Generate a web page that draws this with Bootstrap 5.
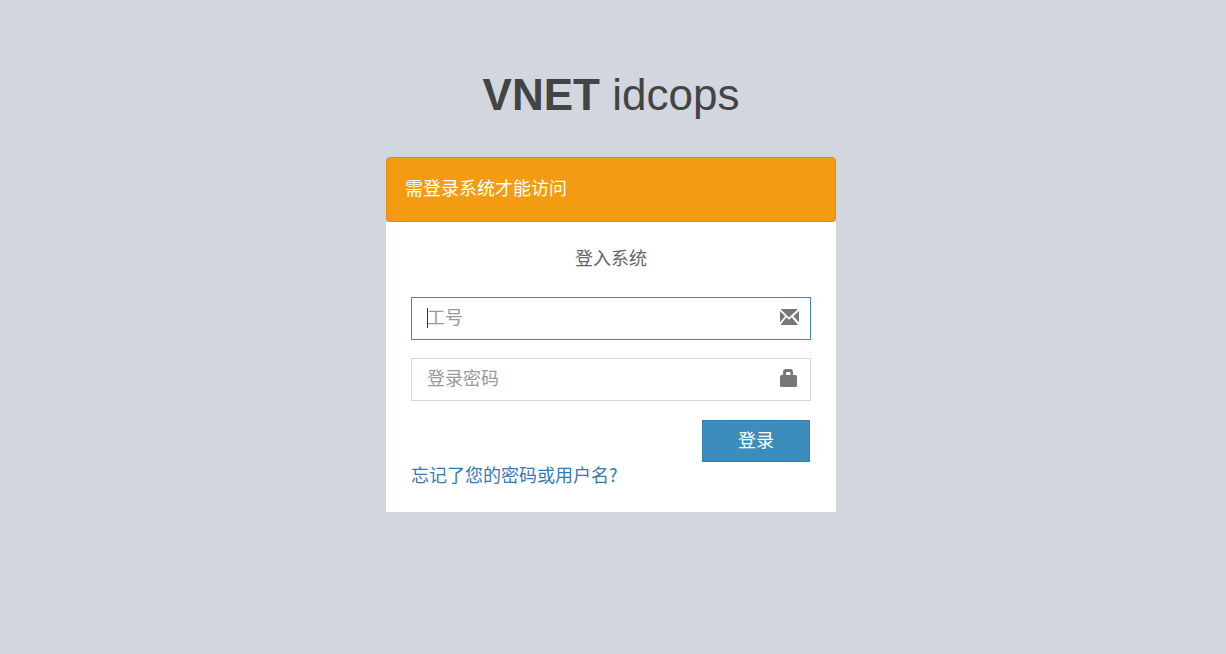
<!DOCTYPE html>
<html lang="zh-CN">
<head>
<meta charset="utf-8">
<meta name="viewport" content="width=device-width, initial-scale=1">
<title>VNET idcops</title>
<link href="https://cdn.jsdelivr.net/npm/bootstrap@5.3.0/dist/css/bootstrap.min.css" rel="stylesheet">
<style>
  body { background: #d2d6de; color: #666; font-family: "Liberation Sans", "Noto Sans CJK SC", sans-serif; font-size: 18px; line-height: 25px; }
  .login-box { max-width: 450px; padding-top: 64px; }
  .login-logo { font-size: 44px; line-height: 62px; color: #444; margin-bottom: 31px; }
  .login-alert { background: #f39c12; border: 1px solid #e08e0b; border-radius: 4px; color: #fff; padding: 19px 18px; }
  .login-body { background: #fff; padding: 25px; }
  .login-title { margin-bottom: 25px; }
  .login-field { margin-bottom: 18px; }
  .login-field .form-control { height: 43px; border: 1px solid #d2d6de; border-radius: 0; padding: 8px 50px 8px 15px; font-size: 18px; line-height: 25px; color: #555; box-shadow: none; }
  .login-field .form-control:focus { border-color: #3c8dbc; caret-color: transparent; }
  .login-field .form-control::placeholder { color: #999; opacity: 1; }
  .field-icon { right: 12px; top: 10px; color: #777; pointer-events: none; }
  .caret-bar { display: none; left: 16px; top: 11px; width: 1px; height: 20px; background: #333; }
  .form-control:focus:placeholder-shown ~ .caret-bar { display: block; }
  .login-btn { width: 108px; height: 42px; margin: 1px 1px 0 0; padding: 6px; font-size: 18px; line-height: 25px; color: #fff; background: #3c8dbc; border: 1px solid #367fa9; border-radius: 0; }
  .login-btn:hover { color: #fff; background: #367fa9; }
  .forgot-link { color: #337ab7; font-family: "Noto Sans CJK SC", sans-serif; }
</style>
</head>
<body>
<div class="pe-1">
  <main class="login-box mx-auto">
    <h1 class="login-logo text-center fw-normal"><b>VNET</b> idcops</h1>
    <div class="login-alert" role="alert">需登录系统才能访问</div>
    <div class="login-body">
      <p class="login-title text-center">登入系统</p>
      <form>
        <div class="login-field position-relative">
          <input class="form-control" type="text" name="username" placeholder="工号" aria-label="工号" autofocus>
          <span class="caret-bar position-absolute"></span>
          <svg class="field-icon position-absolute" width="20" height="20" viewBox="0 0 20 20" fill="currentColor" aria-hidden="true"><path d="M1.500 2h17.500l-9 8.500zM1 4l5.200 5.200L1 15.200zM20 4v11.200l-5.700-6zM7.300 10.200l2.700 2.500 2.700-2.500 6.300 7.800H1.500z"/></svg>
        </div>
        <div class="login-field position-relative">
          <input class="form-control" type="password" name="password" placeholder="登录密码" aria-label="登录密码">
          <svg class="field-icon position-absolute" width="20" height="20" viewBox="0 0 20 20" fill="currentColor" aria-hidden="true"><path fill-rule="evenodd" d="M4 7V4q0-3 3-3h4q3 0 3 3v3h2.500q1.500 0 1.500 1.500v9q0 1.500-1.500 1.500h-14Q1 19 1 17.500v-9Q1 7 2.500 7zM7 7h4.500V5q0-1-1-1H8q-1 0-1 1z"/></svg>
        </div>
        <div class="d-flex justify-content-end"><button class="btn login-btn" type="submit">登录</button></div>
      </form>
      <div class="d-flex"><a class="forgot-link text-decoration-none" href="#">忘记了您的密码或用户名?</a></div>
    </div>
  </main>
</div>
<script src="https://cdn.jsdelivr.net/npm/bootstrap@5.3.0/dist/js/bootstrap.bundle.min.js"></script>
</body>
</html>
